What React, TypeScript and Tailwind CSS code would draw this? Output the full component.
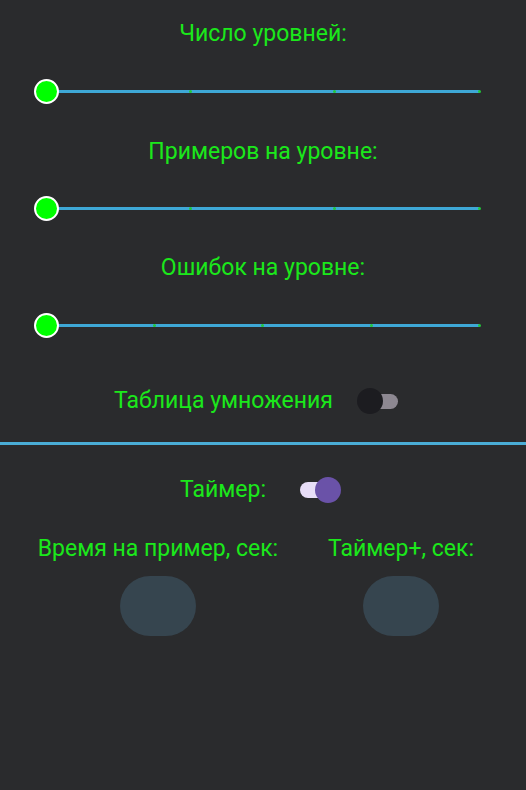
import React from "react";

const green = "text-[#1be81b]";

function Slider({ ticks }: { ticks: number[] }) {
  return (
    <div className="flex h-6 items-center">
      <div className="relative ml-[46px] h-[3px] w-[434px] rounded-full bg-[#3ea8d6]">
        {ticks.map((t) => (
          <div
            key={t}
            className="absolute top-0 h-[3px] w-[3px] rounded-full bg-[#22c83a]"
            style={{ left: `calc(${t * 100}% - 2px)` }}
          />
        ))}
        <div className="absolute -left-[12px] -top-[11px] h-[25px] w-[25px] rounded-full border-2 border-white bg-[#00ff00]" />
      </div>
    </div>
  );
}

function Label({ text }: { text: string }) {
  return (
    <div className={`h-6 whitespace-nowrap text-center text-[23px] leading-6 ${green}`}>{text}</div>
  );
}

export default function App() {
  return (
    <main
      className="h-[790px] w-[526px] overflow-hidden bg-[#2a2b2d]"
      style={{ fontFamily: "Roboto, 'Noto Sans', sans-serif" }}
    >
      <div className="pt-[22px]">
        <Label text="Число уровней:" />
        <div className="mt-[33px]">
          <Slider ticks={[1 / 3, 2 / 3, 1]} />
        </div>
        <div className="mt-[37px]">
          <Label text="Примеров на уровне:" />
        </div>
        <div className="mt-[32px]">
          <Slider ticks={[1 / 3, 2 / 3, 1]} />
        </div>
        <div className="mt-[36px]">
          <Label text="Ошибок на уровне:" />
        </div>
        <div className="mt-[33px]">
          <Slider ticks={[0.25, 0.5, 0.75, 1]} />
        </div>

        <div className="mt-[50px] flex h-7 items-center justify-center pr-[14px]">
          <span className={`text-[23px] ${green}`}>Таблица умножения</span>
          <div className="relative ml-[24px] flex h-[26px] w-[41px] items-center">
            <div className="ml-[5px] h-[15px] w-[36px] rounded-full bg-[#8d8891]" />
            <div className="absolute left-0 top-0 h-[26px] w-[26px] rounded-full bg-[#1c1c20]" />
          </div>
        </div>

        <div className="mt-[27px] h-[3px] w-full bg-[#4aadd6]" />

        <div className="mt-[31px] flex h-7 items-center justify-center pr-[5px]">
          <span className={`text-[23px] ${green}`}>Таймер:</span>
          <div className="relative ml-[34px] flex h-[26px] w-[41px] items-center">
            <div className="h-[16px] w-[37px] rounded-full bg-[#e8def8]" />
            <div className="absolute right-0 top-0 h-[26px] w-[26px] rounded-full bg-[#6a52a8]" />
          </div>
        </div>

        <div className="mt-[33px] grid grid-cols-[316px_1fr]">
          <div className="flex flex-col items-center">
            <Label text="Время на пример, сек:" />
            <div className="mt-[15px] h-[60px] w-[76px] rounded-[30px] bg-[#36454f]" />
          </div>
          <div className="-ml-[40px] flex flex-col items-center">
            <Label text="Таймер+, сек:" />
            <div className="mt-[15px] h-[60px] w-[76px] rounded-[30px] bg-[#36454f]" />
          </div>
        </div>
      </div>
    </main>
  );
}
